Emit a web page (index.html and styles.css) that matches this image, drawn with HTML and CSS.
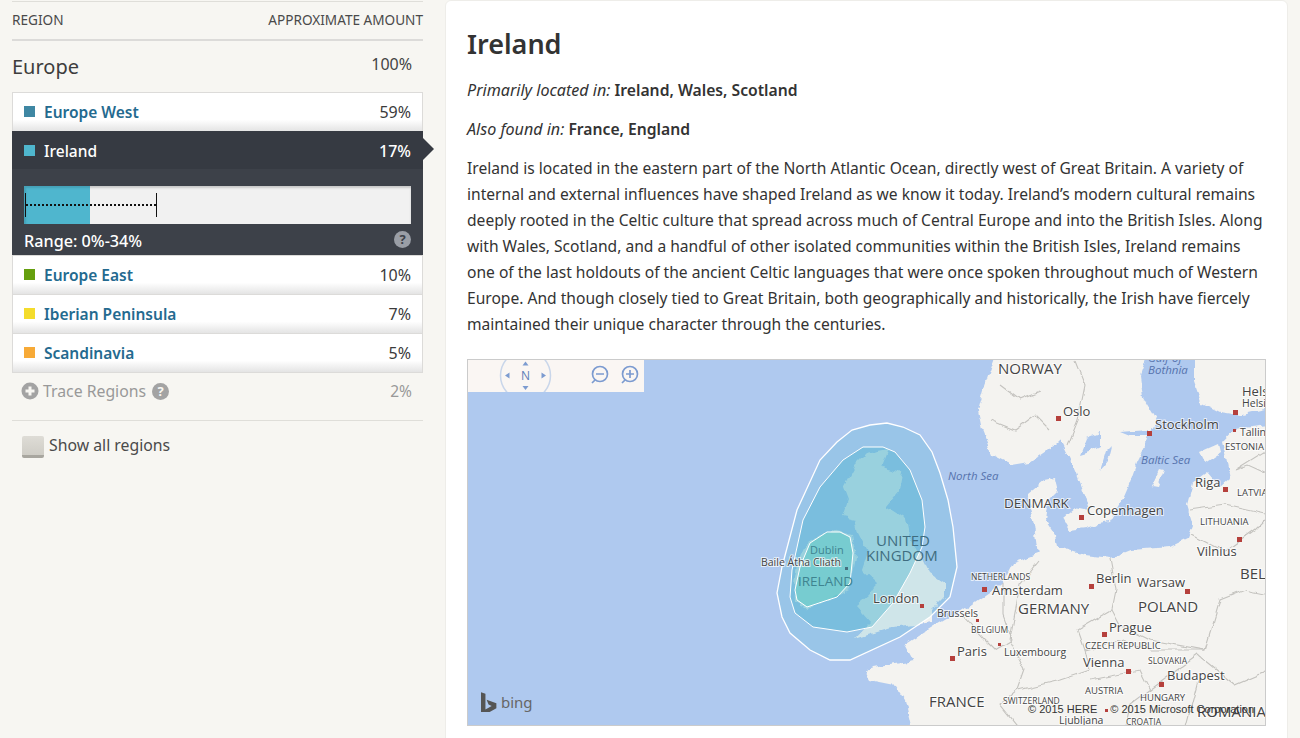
FILE: index.html
```html
<!DOCTYPE html>
<html lang="en">
<head>
<meta charset="utf-8">
<title>Ireland</title>
<link rel="stylesheet" href="styles.css">
</head>
<body>
<div class="page">
  <aside class="side">
    <div class="head"><span>REGION</span><span>APPROXIMATE AMOUNT</span></div>
    <div class="group"><span class="group-name">Europe</span><span class="group-val">100%</span></div>
    <div class="list">
      <div class="row first"><span class="sq west"></span><a class="name">Europe West</a><span class="val">59%</span></div>
      <div class="active">
        <div class="active-head"><span class="sq ire"></span><span class="name-on">Ireland</span><span class="val-on">17%</span></div>
        <div class="active-body">
          <div class="bar">
            <div class="bar-fill"></div>
            <div class="bar-range"></div>
          </div>
          <div class="range"><span class="range-text">Range: 0%-34%</span><span class="q q-dark">?</span></div>
        </div>
      </div>
      <div class="row"><span class="sq east"></span><a class="name">Europe East</a><span class="val">10%</span></div>
      <div class="row"><span class="sq iber"></span><a class="name">Iberian Peninsula</a><span class="val">7%</span></div>
      <div class="row"><span class="sq scan"></span><a class="name">Scandinavia</a><span class="val">5%</span></div>
    </div>
    <div class="trace">
      <svg class="plus" viewBox="0 0 18 18" width="18" height="18"><circle cx="9" cy="9" r="8.5" fill="#a3a3a3"/><path d="M9 4.5v9M4.5 9h9" stroke="#f7f6f2" stroke-width="3"/></svg>
      <span class="trace-name">Trace Regions</span><span class="q q-light">?</span><span class="trace-val">2%</span>
    </div>
    <label class="show"><span class="check"></span><span>Show all regions</span></label>
  </aside>
  <main class="panel">
    <h1>Ireland</h1>
    <p class="loc"><em>Primarily located in:</em> <strong>Ireland, Wales, Scotland</strong></p>
    <p class="loc"><em>Also found in:</em> <strong>France, England</strong></p>
    <p class="desc">Ireland is located in the eastern part of the North Atlantic Ocean, directly west of Great Britain. A variety of<br>internal and external influences have shaped Ireland as we know it today. Ireland’s modern cultural remains<br>deeply rooted in the Celtic culture that spread across much of Central Europe and into the British Isles. Along<br>with Wales, Scotland, and a handful of other isolated communities within the British Isles, Ireland remains<br>one of the last holdouts of the ancient Celtic languages that were once spoken throughout much of Western<br>Europe. And though closely tied to Great Britain, both geographically and historically, the Irish have fiercely<br>maintained their unique character through the centuries.</p>
    <div class="map">
      <svg class="map-svg" viewBox="468 360 797 365" width="797" height="365">
        <defs>
          <filter id="soft" x="-5%" y="-5%" width="110%" height="110%">
            <feTurbulence type="fractalNoise" baseFrequency="0.09" numOctaves="3" seed="4"/>
            <feDisplacementMap in="SourceGraphic" scale="7" xChannelSelector="R" yChannelSelector="G"/>
            <feGaussianBlur stdDeviation="0.45"/>
          </filter>
          <filter id="wobble" x="-5%" y="-5%" width="110%" height="110%">
            <feTurbulence type="fractalNoise" baseFrequency="0.07" numOctaves="2" seed="9"/>
            <feDisplacementMap in="SourceGraphic" scale="6" xChannelSelector="R" yChannelSelector="G"/>
            <feGaussianBlur stdDeviation="0.3"/>
          </filter>
        </defs>
        <rect x="468" y="360" width="797" height="365" fill="#afc9ef"/>
        <g fill="#f4f3f0" filter="url(#soft)">
          <path d="M995 356L985 385 978 410 982 430 992 455 1012 465 1030 462 1055 445 1060 440 1066 452 1075 472 1085 497 1093 525 1110 522 1120 505 1130 482 1137 462 1147 442 1150 433 1157 422 1143 398 1140 375 1147 356z"/>
          <path d="M1193 356L1193 382 1200 402 1220 412 1240 415 1270 408 1270 356z"/>
          <path d="M1270 426L1233 430 1222 442 1226 458 1230 478 1220 487 1207 472 1193 482 1187 505 1193 525 1188 538 1170 547 1130 550 1110 558 1085 555 1062 548 1048 548 1040 553 1013 563 1003 583 983 597 960 613 950 617 933 627 905 645 913 660 873 667 865 670 870 680 895 685 905 700 912 730 1270 730z"/>
          <path d="M1027 495L1045 480 1055 478 1058 490 1048 500 1045 520 1055 535 1058 552 1038 556 1034 525z"/>
          <path d="M1063 518L1075 508 1095 512 1103 522 1085 528 1070 530z"/>
          <path d="M867 453L889 449 882 467 903 473 900 490 886 507 906 520 910 540 920 553 930 573 945 583 945 597 932 610 932 622 887 629 855 639 871 622 856 605 868 595 876 583 862 570 868 552 858 533 855 520 842 517 848 500 843 487 855 465z"/>
          <path d="M808 541L833 530 852 535 856 557 850 589 830 599 807 609 795 602 794 583 797 565z"/>
          <path d="M1200 452L1218 444 1220 452 1205 462z"/>
          <path d="M1152 486L1160 469 1164 470 1158 487z"/>
        </g>
        <g fill="#afc9ef" filter="url(#soft)">
          <path d="M1080 455L1087 437 1100 432 1100 447 1090 452z"/>
          <path d="M1100 472L1106 452 1112 446 1108 462z"/>
          <path d="M1120 432L1148 430 1148 436 1130 436z"/>
        </g>
        <g fill="none" stroke="#c4c3bf" stroke-width="1.1" filter="url(#wobble)">
          <path d="M1075 360L1085 385 1078 420 1068 445"/>
          <path d="M1270 448L1235 470 1248 465 1270 475"/>
          <path d="M1190 510L1225 505 1270 515M1192 535L1225 552 1255 530 1270 515"/>
          <path d="M1110 558L1116 590 1112 610 1120 625 1150 640 1205 650 1220 600 1245 590 1270 595"/>
          <path d="M1112 610L1078 630 1085 650 1122 640 1150 650 1205 650"/>
          <path d="M1085 650L1090 670 1060 680 1018 690 1000 705 1020 730"/>
          <path d="M1090 680L1140 670 1150 690 1130 705 1125 730"/>
          <path d="M1150 690L1198 655 1235 685 1270 670M1198 680L1185 730"/>
          <path d="M960 613L985 640 995 650 1012 640 1003 615 1003 583M1040 560L1020 585 1010 640 1025 670 1018 690"/>
          <path d="M1000 385L1020 400 1040 392M990 420L1015 430 1035 415 1050 430"/>
        </g>
        <g class="overlay">
          <path class="o1" d="M870 425L887 423 903 427 920 435 932 452 940 473 948 500 953 527 957 567 950 597 930 617 900 637 850 660 830 660 810 650 790 633 782 617 777 593 782 567 797 510 820 460 837 442 852 430z"/>
          <path class="o2" d="M863 447L883 447 895 452 910 470 922 500 925 527 922 547 910 573 893 603 872 627 847 632 813 627 795 613 790 597 792 570 803 520 820 487 843 460z"/>
          <path class="o3" d="M810 543L827 532 840 532 850 537 853 553 850 583 837 597 807 607 797 600 795 590 800 567z"/>
        </g>
        <g class="cities">
          <rect x="1056" y="416" width="5" height="5"/><rect x="1147" y="431" width="5" height="5"/><rect x="1233" y="410" width="5" height="5"/>
          <rect x="1233" y="429" width="3" height="3"/><rect x="1223" y="487" width="5" height="5"/><rect x="1237" y="537" width="5" height="5"/>
          <rect x="1079" y="515" width="5" height="5"/><rect x="982" y="587" width="5" height="5"/><rect x="1089" y="584" width="5" height="5"/>
          <rect x="1185" y="589" width="5" height="5"/><rect x="1102" y="632" width="5" height="5"/><rect x="1126" y="669" width="5" height="5"/>
          <rect x="1159" y="682" width="5" height="5"/><rect x="950" y="656" width="5" height="5"/><rect x="976" y="619" width="3" height="3"/>
          <rect x="998" y="643" width="3" height="3"/><rect x="920" y="604" width="4" height="4"/><rect x="845" y="567" width="3" height="3" class="dim"/>
          <rect x="1105" y="709" width="3" height="3"/>
        </g>
        <g class="lbl">
          <text x="998" y="374" class="big">NORWAY</text>
          <text x="1063" y="416" class="city">Oslo</text>
          <text x="1155" y="429" class="city">Stockholm</text>
          <text x="1242" y="396" class="city">Hels</text>
          <text x="1242" y="407" class="sm">Helsi</text>
          <text x="1240" y="436" class="sm">Tallin</text>
          <text x="1225" y="450" class="xs">ESTONIA</text>
          <text x="1195" y="487" class="city">Riga</text>
          <text x="1237" y="496" class="xs">LATVIA</text>
          <text x="1200" y="525" class="xs">LITHUANIA</text>
          <text x="1197" y="556" class="city">Vilnius</text>
          <text x="1240" y="579" class="big">BEL</text>
          <text x="1004" y="508" class="mid">DENMARK</text>
          <text x="1087" y="515" class="city">Copenhagen</text>
          <text x="971" y="580" class="xxs">NETHERLANDS</text>
          <text x="992" y="595" class="city">Amsterdam</text>
          <text x="1096" y="583" class="city">Berlin</text>
          <text x="1137" y="587" class="city">Warsaw</text>
          <text x="1018" y="614" class="big">GERMANY</text>
          <text x="1138" y="612" class="big">POLAND</text>
          <text x="1109" y="632" class="city">Prague</text>
          <text x="1085" y="649" class="xs">CZECH REPUBLIC</text>
          <text x="1083" y="667" class="city">Vienna</text>
          <text x="1148" y="664" class="xxs">SLOVAKIA</text>
          <text x="1167" y="680" class="city">Budapest</text>
          <text x="1085" y="694" class="xs">AUSTRIA</text>
          <text x="1140" y="701" class="xs">HUNGARY</text>
          <text x="929" y="707" class="big">FRANCE</text>
          <text x="1003" y="704" class="xxs">SWITZERLAND</text>
          <text x="1059" y="724" class="sm">Ljubljana</text>
          <text x="1126" y="725" class="xxs">CROATIA</text>
          <text x="1197" y="717" class="big">ROMANIA</text>
          <text x="957" y="656" class="city">Paris</text>
          <text x="1004" y="656" class="sm">Luxembourg</text>
          <text x="971" y="633" class="xxs">BELGIUM</text>
          <text x="937" y="617" class="sm">Brussels</text>
          <text x="873" y="603" class="city">London</text>
          <text x="761" y="566" class="sm">Baile Átha Cliath</text>
        </g>
        <g class="lbl-sea">
          <text x="1148" y="362">Gulf of</text>
          <text x="1148" y="374">Bothnia</text>
          <text x="1141" y="464">Baltic Sea</text>
          <text x="948" y="480">North Sea</text>
        </g>
        <g class="lbl-over">
          <text x="876" y="546">UNITED</text>
          <text x="866" y="561">KINGDOM</text>
          <text x="798" y="586" class="ire-name">IRELAND</text>
          <text x="810" y="554" class="dub">Dublin</text>
        </g>
      </svg>
      <div class="controls">
        <svg viewBox="468 360 176 32" width="176" height="32">
          <circle cx="525.5" cy="375.5" r="25" fill="none" stroke="#c9d6ea" stroke-width="1.5"/>
          <path d="M525.5 361.5l3 4h-6zM525.5 390l3-4h-6zM505 375.5l4.500-3v6zM546 375.5l-4.500-3v6z" fill="#7c9bd0"/>
          <text x="525.500" y="380" class="compass">N</text>
          <g fill="none" stroke="#7c9bd0" stroke-width="1.700">
            <circle cx="600" cy="374" r="7.500"/><path d="M595 380l-3 3M596 374h8"/>
            <circle cx="630" cy="374" r="7.500"/><path d="M625 380l-3 3M626 374h8M630 370v8"/>
          </g>
        </svg>
      </div>
      <div class="bing">
        <svg viewBox="0 0 18 22" width="16" height="20"><path d="M0 0l5 1.800v17.700l7-4-3.500-1.700-2.200-5.400 11 3.900v5.600l-12.300 7.100-5-2.800z" fill="#555"/></svg>
        <span>bing</span>
      </div>
      <div class="copy"><span>© 2015 HERE</span><span>© 2015 Microsoft Corporation</span></div>
    </div>
  </main>
</div>
</body>
</html>
```
FILE: styles.css
```css
* { box-sizing: border-box; }
html, body { margin: 0; height: 738px; overflow: hidden; }
body { background: #f7f6f2; color: #3b3b3b; font-family: "Noto Sans", "Open Sans", sans-serif; font-size: 15px; }
.page { display: flex; height: 738px; align-items: flex-start; }

.side { width: 411px; margin: 0 22px 0 12px; padding-top: 1px; flex: none; }
.head { display: flex; justify-content: space-between; align-items: center; height: 40px; border-top: 1px solid #dfded9; border-bottom: 2px solid #dcdbd9; font-size: 13.600px; color: #4a4a4a; padding-bottom: 2px; }
.group { display: flex; justify-content: space-between; height: 51px; padding: 12px 11px 0 0; }
.group-name { font-size: 20px; line-height: 28px; color: #3d3d3d; }
.group-val { font-size: 16px; line-height: 22px; color: #444; }
.list { border: 1px solid #dcdbd9; }
.row { display: flex; align-items: center; height: 39px; padding: 0 11px 2px; background: linear-gradient(#fff 0, #fff 70%, #e4e4e4 100%); border-top: 1px solid #dcdbd9; }
.row.first { height: 38px; border-top: 0; }
.sq { width: 11px; height: 11px; margin-right: 9px; flex: none; }
.west { background: #3f87a3; }
.ire { background: #4fb6ce; }
.east { background: #659f0e; }
.iber { background: #f4dc2c; }
.scan { background: #f7aa37; }
.name { flex: 1; padding-top: 2px; font-weight: 600; font-size: 15.500px; color: #246a8f; }
.val { padding-top: 2px; font-size: 16px; color: #3b3b3b; }
.active { margin: 0 -1px; position: relative; }
.active-head { display: flex; align-items: center; height: 38px; padding: 0 12px; background: #363a42; color: #fff; }
.active-head::after { content: ""; position: absolute; left: 100%; top: 7px; border-left: 11px solid #363a42; border-top: 11px solid transparent; border-bottom: 11px solid transparent; }
.name-on { flex: 1; font-size: 15.500px; font-weight: 500; padding-top: 1px; }
.val-on { font-size: 16px; font-weight: 500; padding-top: 1px; }
.active-body { background: #3d4149; height: 86px; padding: 17px 12px 0; color: #fff; }
.bar { position: relative; height: 38px; background: #f1f1f1; box-shadow: inset 0 2px 2px #c9c9c9; }
.bar-fill { width: 66px; height: 100%; background: #4fb6ce; box-shadow: inset 2px 2px 2px #45a1b8; }
.bar-range { position: absolute; left: 1px; top: 7px; width: 132px; height: 24px; border-left: 1px solid #111; border-right: 1px solid #111; }
.bar-range::before { content: ""; position: absolute; left: 0; right: 0; top: 11px; border-top: 2px dotted #111; }
.range { display: flex; justify-content: space-between; align-items: center; height: 31px; font-size: 16.200px; font-weight: 500; }
.range-text { padding-top: 2px; }
.q { display: inline-flex; align-items: center; justify-content: center; width: 17px; height: 17px; border-radius: 50%; font-size: 13px; font-weight: 700; line-height: 1; }
.q-dark { background: #9a9ea6; color: #3d4149; }
.q-light { background: #a3a3a3; color: #f7f6f2; margin-left: 6px; }
.trace { display: flex; align-items: center; height: 38px; padding: 0 11px 2px 9px; color: #999; }
.plus { margin-right: 4px; flex: none; }
.trace-name { font-size: 15.800px; }
.trace-val { margin-left: auto; font-size: 15.500px; }
.show { display: flex; align-items: center; height: 48px; margin-top: 9px; border-top: 1px solid #dfded9; font-size: 15.800px; color: #4a4a4a; padding-left: 10px; }
.check { width: 22px; height: 22px; margin: 4px 5px 0 0; border-radius: 2px; background: linear-gradient(#dedcd6, #cfcdc6); border-bottom: 3px solid #a8a69f; }

.panel { width: 843px; height: 760px; padding: 0 21px; background: #fff; border: 1px solid #eeede9; border-radius: 6px; flex: none; }
h1 { margin: 0; padding-top: 23px; font-size: 27px; line-height: 40px; font-weight: 600; color: #333; }
.loc { margin: 0; font-size: 15.700px; line-height: 26px; color: #333; }
h1 + .loc { margin-top: 13px; }
.loc + .loc { margin-top: 13px; }
.loc em { font-size: 16.100px; }
.loc strong { font-weight: 600; }
.desc { margin: 13px 0 0; font-size: 15.600px; line-height: 26px; color: #333; white-space: nowrap; }
.map { position: relative; width: 799px; height: 367px; margin-top: 22px; border: 1px solid #cbcbcb; overflow: hidden; }
.map-svg { display: block; font-family: "Open Sans", "Noto Sans", sans-serif; }
.overlay path { stroke: #fff; }
.o1 { fill: #4fb5d0; fill-opacity: .22; stroke-width: 1.300; }
.o2 { fill: #4fb5d0; fill-opacity: .42; stroke-width: 1; }
.o3 { fill: #5bc9c4; fill-opacity: .55; stroke-width: 1; }
.cities rect { fill: #b5403c; }
.cities .dim { fill: #47707f; }
.lbl text { fill: #444; stroke: #fff; stroke-opacity: .7; stroke-width: 2px; paint-order: stroke; }
.big { font-size: 15px; }
.mid { font-size: 13.500px; }
.city { font-size: 13px; }
.sm { font-size: 10.500px; }
.xs { font-size: 9.500px; }
.xxs { font-size: 8.500px; }
.lbl-sea text { fill: #5673ad; font-size: 11.500px; font-style: italic; }
.lbl-over text { fill: #3f6d80; font-size: 15px; }
.lbl-over .ire-name { font-size: 13.500px; fill: #3f8490; }
.lbl-over .dub { font-size: 11px; fill: #3f8490; }
.controls { position: absolute; left: 0; top: 0; width: 176px; height: 32px; background: #faf6f3; overflow: hidden; }
.controls svg { display: block; }
.compass { font-size: 12px; fill: #5d7fb8; text-anchor: middle; font-family: "Open Sans", sans-serif; }
.bing { position: absolute; left: 13px; bottom: 13px; display: flex; align-items: center; gap: 4px; color: #666; font-size: 15px; line-height: 20px; }
.bing svg { display: block; }
.copy { position: absolute; left: 560px; bottom: 9px; display: flex; gap: 13px; font-family: "Liberation Sans", Arial, sans-serif; font-size: 11px; line-height: 13px; color: #333; white-space: nowrap; }
```
